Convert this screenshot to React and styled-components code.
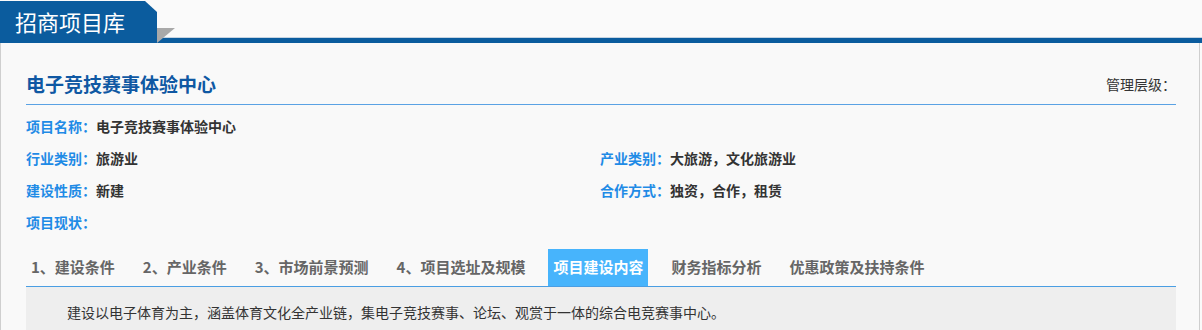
import React from "react";
import styled, { createGlobalStyle } from "styled-components";

const GlobalStyle = createGlobalStyle`
  html, body {
    margin: 0;
    padding: 0;
    background: #fafafa;
    font-family: "Noto Sans CJK SC", "Microsoft YaHei", "Noto Sans", sans-serif;
  }
`;

const Header = styled.header`
  display: flex;
  align-items: flex-end;
  height: 43px;
`;

const TitleTab = styled.div`
  flex: none;
  width: 157px;
  height: 42px;
  box-sizing: border-box;
  padding-left: 15px;
  background: #0b5c9e;
  color: #fff;
  font-size: 22px;
  line-height: 41px;
  clip-path: polygon(0 0, 145px 0, 157px 11px, 157px 100%, 0 100%);
`;

const HeaderBar = styled.div`
  position: relative;
  flex: 1;
  height: 5px;
  background: #0b5c9e;
  border-top: 1px solid #c6d4e1;

  &::before {
    content: "";
    position: absolute;
    left: 0;
    bottom: 0;
    width: 18px;
    height: 15px;
    background: #a9a9a9;
    clip-path: polygon(0 0, 100% 0, 0 100%);
  }
`;

const Panel = styled.main`
  width: 1200px;
  min-height: 300px;
  box-sizing: border-box;
  border-left: 1px solid #cfcfcf;
  border-right: 1px solid #cfcfcf;
  background: #f9f9f9;
  padding: 0 23px 0 25px;
`;

const TitleRow = styled.div`
  display: flex;
  justify-content: space-between;
  align-items: center;
  padding-top: 20px;
  height: 41px;
  border-bottom: 1px solid #5aa2e4;
`;

const ProjectTitle = styled.h1`
  margin: 0;
  font-size: 19px;
  line-height: 40px;
  font-weight: bold;
  color: #0f58a3;
`;

const Level = styled.span`
  font-size: 14px;
  line-height: 40px;
  color: #333;
`;

const InfoGrid = styled.div`
  display: grid;
  grid-template-columns: 574px 1fr;
  padding-top: 5px;
  font-size: 14px;
  line-height: 32px;
`;

const Field = styled.div`
  display: flex;
  grid-column: ${(p) => (p.$full ? "1 / -1" : "auto")};
`;

const Label = styled.span`
  color: #1f8be6;
  font-weight: bold;
`;

const Value = styled.span`
  color: #333;
  font-weight: bold;
`;

const TabBar = styled.nav`
  display: flex;
  gap: 18px;
  margin-top: 11px;
  border-bottom: 1px solid #4a9ee3;
`;

const Tab = styled.div`
  padding: 0 5px;
  height: 37px;
  line-height: 36px;
  font-size: 15px;
  font-weight: bold;
  color: ${(p) => (p.$active ? "#fff" : "#666")};
  background: ${(p) => (p.$active ? "#47b4fc" : "transparent")};
`;

const TabContent = styled.div`
  background: #eeeeee;
  padding: 15px 0 20px 41px;
  font-size: 14px;
  line-height: 20px;
  color: #333;
`;

const tabs = [
  "1、建设条件",
  "2、产业条件",
  "3、市场前景预测",
  "4、项目选址及规模",
  "项目建设内容",
  "财务指标分析",
  "优惠政策及扶持条件",
];

export default function App() {
  return (
    <>
      <GlobalStyle />
      <Header>
        <TitleTab>招商项目库</TitleTab>
        <HeaderBar />
      </Header>
      <Panel>
        <TitleRow>
          <ProjectTitle>电子竞技赛事体验中心</ProjectTitle>
          <Level>管理层级：</Level>
        </TitleRow>
        <InfoGrid>
          <Field $full>
            <Label>项目名称：</Label>
            <Value>电子竞技赛事体验中心</Value>
          </Field>
          <Field>
            <Label>行业类别：</Label>
            <Value>旅游业</Value>
          </Field>
          <Field>
            <Label>产业类别：</Label>
            <Value>大旅游，文化旅游业</Value>
          </Field>
          <Field>
            <Label>建设性质：</Label>
            <Value>新建</Value>
          </Field>
          <Field>
            <Label>合作方式：</Label>
            <Value>独资，合作，租赁</Value>
          </Field>
          <Field $full>
            <Label>项目现状：</Label>
            <Value></Value>
          </Field>
        </InfoGrid>
        <TabBar>
          {tabs.map((t) => (
            <Tab key={t} $active={t === "项目建设内容"}>
              {t}
            </Tab>
          ))}
        </TabBar>
        <TabContent>
          建设以电子体育为主，涵盖体育文化全产业链，集电子竞技赛事、论坛、观赏于一体的综合电竞赛事中心。
        </TabContent>
      </Panel>
    </>
  );
}
